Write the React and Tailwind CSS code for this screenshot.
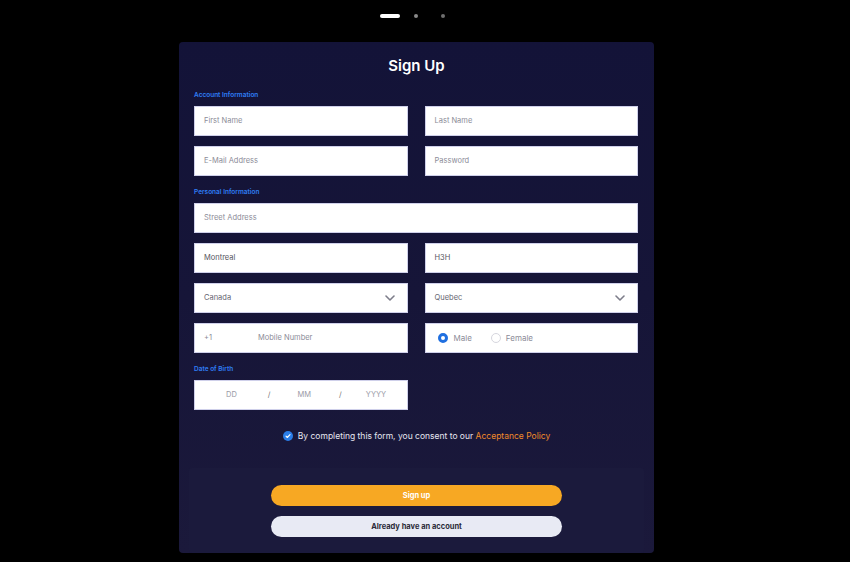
import React from "react";

const font = { fontFamily: "Inter, 'Open Sans', sans-serif" };

function Field({ children, className = "" }) {
  return (
    <div
      className={`h-[30px] bg-white border border-[#cfd0ea] flex items-center px-[9px] text-[7.5px] text-[#8c8c98] ${className}`}
    >
      {children}
    </div>
  );
}

function Chevron() {
  return (
    <svg width="10" height="6" viewBox="0 0 10 6" className="ml-auto mr-[3px]">
      <path d="M1 1l4 4 4-4" fill="none" stroke="#7d7d8a" strokeWidth="1.6" strokeLinecap="round" strokeLinejoin="round" />
    </svg>
  );
}

function Label({ children, className = "" }) {
  return (
    <div className={`h-[10px] leading-[10px] text-[6.5px] font-semibold text-[#2f7ef5] ${className}`}>{children}</div>
  );
}

export default function App() {
  return (
    <div style={font} className="w-[850px] h-[562px] bg-black flex flex-col overflow-hidden">
      <div className="h-[42px] flex items-center pb-[10px] ml-[380px]">
        <div className="w-[20px] h-[4px] rounded-full bg-white" />
        <div className="ml-[14px] w-[4px] h-[4px] rounded-full bg-[#8a8a8a]" />
        <div className="ml-[23px] w-[4px] h-[4px] rounded-full bg-[#6e6e6e]" />
      </div>

      <div className="ml-[179px] w-[475px] h-[511px] rounded-[4px] bg-gradient-to-b from-[#131338] via-[#161538] to-[#1b193b] flex flex-col">
        <div className="px-[15px]">
          <div className="mt-[14px] h-[20px] leading-[20px] text-center text-white text-[15px] font-semibold">Sign Up</div>

          <Label className="mt-[14px]">Account Information</Label>
          <div className="mt-[6px] grid grid-cols-2 gap-x-[17px] gap-y-[10px] pr-[1px]">
            <Field>First Name</Field>
            <Field>Last Name</Field>
            <Field>E-Mail Address</Field>
            <Field>Password</Field>
          </div>

          <Label className="mt-[11px]">Personal Information</Label>
          <div className="mt-[6px] grid grid-cols-2 gap-x-[17px] gap-y-[10px] pr-[1px]">
            <Field className="col-span-2">Street Address</Field>
            <Field className="text-[#555560]">Montreal</Field>
            <Field className="text-[#555560]">H3H</Field>
            <Field className="text-[#666672]">
              Canada
              <Chevron />
            </Field>
            <Field className="text-[#666672]">
              Quebec
              <Chevron />
            </Field>
            <Field>
              <span className="w-[54px]">+1</span>
              <span>Mobile Number</span>
            </Field>
            <Field className="pl-[12px]">
              <span className="w-[10px] h-[10px] rounded-full border-[3px] border-[#1f6fe0] bg-white" />
              <span className="ml-[6px] text-[#8c8c98] text-[8px]">Male</span>
              <span className="ml-[19px] w-[10px] h-[10px] rounded-full border border-[#d6d6de] bg-white" />
              <span className="ml-[5px] text-[#8c8c98] text-[8px]">Female</span>
            </Field>
          </div>

          <Label className="mt-[11px]">Date of Birth</Label>
          <div className="mt-[6px] grid grid-cols-2 gap-x-[17px] pr-[1px]">
            <Field className="text-[#9a9aa6]">
              <span className="ml-[22px]">DD</span>
              <span className="ml-[31px] text-[#777]">/</span>
              <span className="ml-[27px]">MM</span>
              <span className="ml-[28px] text-[#777]">/</span>
              <span className="ml-[24px]">YYYY</span>
            </Field>
          </div>

          <div className="mt-[20px] h-[12px] flex items-center justify-center text-[8.5px] text-[#e6e6f0]">
            <span className="w-[10px] h-[10px] rounded-full bg-[#2a7de8] flex items-center justify-center mr-[5px]">
              <svg width="6" height="6" viewBox="0 0 6 6">
                <path d="M1 3.2l1.3 1.3L5 1.7" fill="none" stroke="white" strokeWidth="1.1" strokeLinecap="round" strokeLinejoin="round" />
              </svg>
            </span>
            <span>By completing this form, you consent to our&nbsp;</span>
            <span className="text-[#f08a2a]">Acceptance Policy</span>
          </div>
        </div>

        <div className="mt-[26px] mx-[10px] flex-1 bg-[#1b1a3c] rounded-[3px] flex flex-col items-center pt-[17px] gap-[10px]">
          <div className="w-[291px] h-[21px] rounded-full bg-[#f7a823] flex items-center justify-center text-white text-[7.5px] font-bold">
            Sign up
          </div>
          <div className="w-[291px] h-[21px] rounded-full bg-[#e8eaf4] flex items-center justify-center text-[#2b2b38] text-[7.5px] font-bold">
            Already have an account
          </div>
        </div>
      </div>
    </div>
  );
}
